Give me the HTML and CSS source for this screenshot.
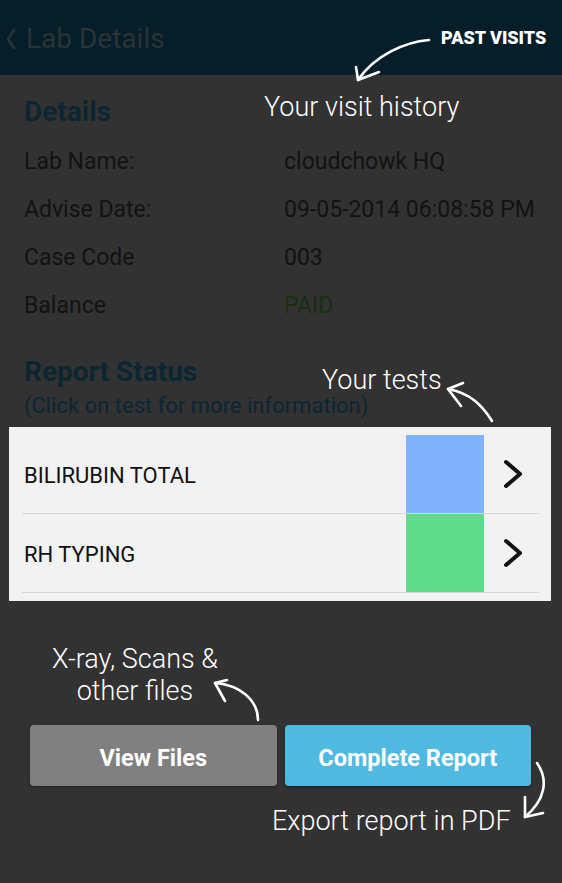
FILE: index.html
```html
<!DOCTYPE html>
<html>
<head>
<meta charset="utf-8">
<link rel="stylesheet" href="styles.css">
</head>
<body>
<div class="screen">
  <header class="appbar">
    <svg class="back" width="14" height="24" viewBox="0 0 14 24"><polyline points="10,3 4,12 10,21" fill="none" stroke="#263236" stroke-width="3" stroke-linecap="round" stroke-linejoin="round"/></svg>
    <span class="title">Lab Details</span>
  </header>

  <section class="details">
    <h2 class="heading">Details</h2>
    <div class="row"><span class="label">Lab Name:</span><span class="value">cloudchowk HQ</span></div>
    <div class="row"><span class="label">Advise Date:</span><span class="value">09-05-2014 06:08:58 PM</span></div>
    <div class="row"><span class="label">Case Code</span><span class="value">003</span></div>
    <div class="row"><span class="label">Balance</span><span class="value paid">PAID</span></div>
    <h2 class="heading report">Report Status</h2>
    <p class="sub">(Click on test for more information)</p>
  </section>

  <div class="tests">
    <div class="test">
      <span class="test-name">BILIRUBIN TOTAL</span>
      <span class="swatch blue"></span>
      <span class="chev"><svg width="24" height="34" viewBox="0 0 24 34"><polyline points="6,5 20,17 6,29" fill="none" stroke="#111" stroke-width="4" stroke-linecap="round" stroke-linejoin="round"/></svg></span>
    </div>
    <div class="test">
      <span class="test-name">RH TYPING</span>
      <span class="swatch green"></span>
      <span class="chev"><svg width="24" height="34" viewBox="0 0 24 34"><polyline points="6,5 20,17 6,29" fill="none" stroke="#111" stroke-width="4" stroke-linecap="round" stroke-linejoin="round"/></svg></span>
    </div>
  </div>

  <div class="actions">
    <button class="btn grey">View Files</button>
    <button class="btn blue-btn">Complete Report</button>
  </div>

  <div class="coach past">PAST VISITS</div>
  <div class="coach note history">Your visit history</div>
  <div class="coach note yourtests">Your tests</div>
  <div class="coach note xray">X-ray, Scans &amp;<br>other files</div>
  <div class="coach note export">Export report in PDF</div>

  <svg class="arrows" width="562" height="883" viewBox="0 0 562 883">
    <g fill="none" stroke="#fff" stroke-width="2.6" stroke-linecap="round" stroke-linejoin="round">
      <path d="M429 40 C 405 42, 375 55, 358 80"/>
      <path d="M356 67 L358 80 L379 72"/>
      <path d="M492 421 C 482 405, 470 393, 448 389"/>
      <path d="M463 383 L448 389 L461 406"/>
      <path d="M258 720 C 258 700, 240 685, 215 683"/>
      <path d="M227 680 L215 683 L225 701"/>
      <path d="M537 763 C 549 780, 545 800, 525 817"/>
      <path d="M525 797 L525 817 L543 813"/>
    </g>
  </svg>
</div>
</body>
</html>
```

FILE: styles.css
```css
html, body {
  margin: 0;
  padding: 0;
  background: #323232;
}

.screen {
  position: relative;
  width: 562px;
  height: 883px;
  overflow: hidden;
  background: #323232;
  font-family: Roboto, "Noto Sans", sans-serif;
}

.appbar {
  height: 75px;
  background: #061e29;
  display: flex;
  align-items: center;
  padding-left: 4px;
}

.back {
  margin-right: 8px;
  margin-top: 2px;
}

.title {
  font-size: 28px;
  color: #2b3336;
  margin-top: 2px;
}

.details {
  padding: 21px 24px 0;
}

.heading {
  margin: 0 0 9px;
  font-size: 28px;
  line-height: 32px;
  font-weight: 700;
  color: #0b2532;
}

.heading.report {
  margin: 27px 0 0;
}

.row {
  display: flex;
  height: 48px;
  align-items: center;
  font-size: 23px;
  color: #121212;
}

.label {
  width: 260px;
}

.paid {
  color: #16300f;
}

.sub {
  margin: 0;
  font-size: 22px;
  line-height: 36px;
  color: #0b2532;
}

.tests {
  margin: 3px 11px 0 9px;
  background: #f2f2f2;
  padding: 8px 12px 8px 13px;
}

.test {
  display: flex;
  align-items: center;
  height: 78px;
  border-bottom: 1px solid #d6d6d6;
  padding-left: 2px;
}

.test-name {
  flex: 1;
  font-size: 22px;
  color: #111;
  padding-top: 3px;
}

.swatch {
  width: 78px;
  height: 78px;
  align-self: flex-start;
}

.swatch.blue { background: #81b3fd; }
.swatch.green { background: #5fdb8c; }

.chev {
  width: 55px;
  display: flex;
  justify-content: center;
  padding-left: 0;
}

.actions {
  display: flex;
  gap: 8px;
  margin-top: 124px;
  padding: 0 31px 0 30px;
}

.btn {
  flex: 1;
  height: 61px;
  border: none;
  border-radius: 4px;
  padding: 4px 0 0;
  font-family: Roboto, sans-serif;
  font-weight: 700;
  font-size: 23.5px;
  color: #fff;
  box-shadow: 0 1px 2px rgba(0,0,0,0.4);
}

.btn.grey { background: #808080; }
.btn.blue-btn { background: #4fb9e2; }

.coach {
  position: absolute;
  color: #fff;
  white-space: nowrap;
}

.past {
  left: 441px;
  top: 28px;
  font-size: 18px;
  font-weight: 900;
  line-height: 20px;
}

.note {
  font-weight: 300;
  font-size: 27px;
  line-height: 32px;
}

.history { left: 264px; top: 91px; }
.yourtests { left: 322px; top: 364px; }
.xray { left: 46px; top: 643px; text-align: center; width: 178px; }
.export { left: 272px; top: 805px; }

.arrows {
  position: absolute;
  left: 0;
  top: 0;
  pointer-events: none;
}
```
